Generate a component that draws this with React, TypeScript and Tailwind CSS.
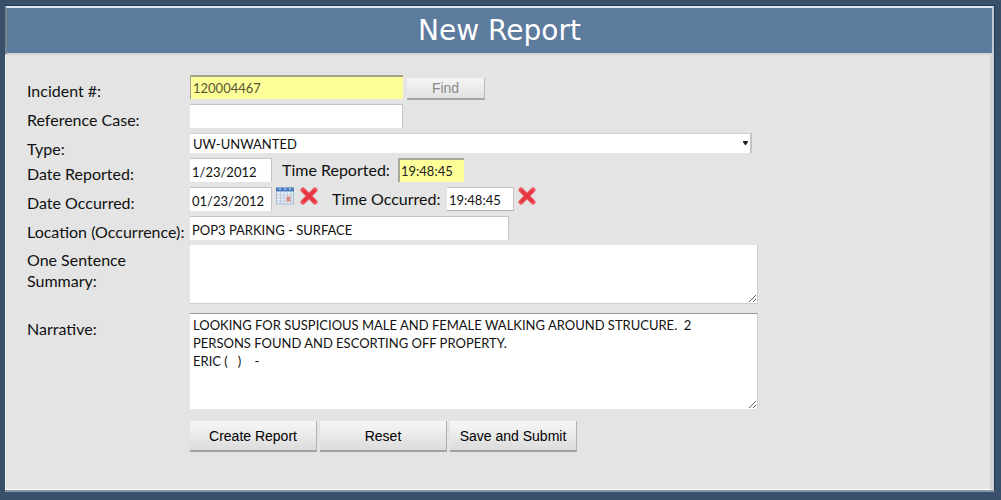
import React, { useState } from 'react';

const fieldClass =
  'h-6 border-t border-r border-t-[#c4c4c4] border-r-[#c4c4c4] bg-white px-[2px] pt-[2px] text-[13px] text-[#111] outline-none';
const labelClass = 'w-[163px] shrink-0 pt-1 text-[16px] leading-6';
const buttonClass =
  "h-[31px] w-[127px] border-r border-b-2 border-r-[#b0b0b0] border-b-[#a0a0a0] bg-linear-to-b from-[#f7f7f7] to-[#dcdcdc] font-['Liberation_Sans',sans-serif] text-[14px] leading-6 text-black";

const CalendarIcon = () => (
  <svg width="18" height="18" viewBox="0 0 18 18">
    <rect x="0.5" y="1" width="17" height="16" fill="#e6edf6" stroke="#a9bdd3" strokeWidth="1" />
    <rect x="0" y="0.5" width="18" height="4" fill="#4a7dbd" />
    <path d="M3 2h2M8 2h2M13 2h2" stroke="#a8c6e8" strokeWidth="1.5" />
    <path d="M4.5 5v12M8 5v12M11.5 5v12M15 5v12M1 8h16M1 11h16M1 14h16" stroke="#b4c5d8" strokeWidth="0.8" />
    <rect x="10.5" y="9.5" width="4" height="5" fill="#dc8b80" />
  </svg>
);

const ClearIcon = () => (
  <svg width="18" height="18" viewBox="0 0 18 18">
    <path d="M3 3L15 15M15 3L3 15" stroke="#ee5560" strokeWidth="5" strokeLinecap="round" />
    <path d="M4 4L14 14M14 4L4 14" stroke="#e33540" strokeWidth="3" strokeLinecap="round" />
  </svg>
);

const App: React.FC = () => {
  const [dateOccurred, setDateOccurred] = useState('01/23/2012');
  const [timeOccurred, setTimeOccurred] = useState('19:48:45');

  return (
    <div className="flex min-h-screen flex-col bg-[#38506a] pt-[5px] pr-[6px] pb-2 pl-[5px] font-['Lato','Liberation_Sans',sans-serif] text-[#111]">
      <div className="flex flex-1 flex-col border-t border-r border-b-2 border-[#1f3a59] border-b-[#8495a5] bg-[#e4e4e4]">
        <h1 className="h-[49px] border-2 border-t-[#dfe6f2] border-r-[#c2cad6] border-b-[#d3d3d3] border-l-[#76828e] bg-[#5d7b9d] text-center font-['DejaVu_Sans',sans-serif] text-[28px] leading-[46px] text-white">
          New Report
        </h1>

        <form
          className="flex flex-1 flex-col gap-[5px] border-r-4 border-b border-l border-r-[#d3d3d3] border-b-white border-l-[#f4f4f4] pt-5 pb-3 pl-[21px]"
          onSubmit={(e) => e.preventDefault()}
        >
          <div className="flex h-6">
            <label htmlFor="incident" className={labelClass}>Incident #:</label>
            <input
              id="incident"
              className="h-6 w-[213px] border-t-2 border-l border-[#a3a38c] bg-[#ffff99] px-[2px] text-[13px] text-[#55552f] outline-none"
              defaultValue="120004467"
            />
            <button
              type="button"
              className="mt-[3px] ml-1 h-[22px] w-[78px] border-r border-b-2 border-r-[#b8b8b8] border-b-[#a4a4a4] bg-linear-to-b from-[#f5f5f5] to-[#e2e2e2] font-['Liberation_Sans',sans-serif] text-[14px] leading-5 text-[#8a8a8a]"
            >
              Find
            </button>
          </div>

          <div className="flex h-6">
            <label htmlFor="refcase" className={labelClass}>Reference Case:</label>
            <input id="refcase" className={`${fieldClass} w-[213px]`} />
          </div>

          <div className="flex h-5">
            <label htmlFor="type" className={labelClass}>Type:</label>
            <div className="relative w-[562px]">
              <select
                id="type"
                className="block h-5 w-full appearance-none border-t border-r-2 border-t-[#cfcfcf] border-r-[#c4c4c4] bg-white px-[3px] text-[13px] leading-4 text-[#111] outline-none"
              >
                <option>UW-UNWANTED</option>
              </select>
              <svg className="pointer-events-none absolute top-2 right-1" width="5" height="4" viewBox="0 0 5 4">
                <path d="M0 0h5v1L3 4H2L0 1z" fill="#222" />
              </svg>
            </div>
          </div>

          <div className="flex h-6">
            <label htmlFor="datereported" className={labelClass}>Date Reported:</label>
            <input id="datereported" className={`${fieldClass} w-[82px]`} defaultValue="1/23/2012" />
            <label htmlFor="timereported" className="ml-[10px] w-[116px] text-[16px] leading-6">Time Reported:</label>
            <input
              id="timereported"
              className="h-6 w-[66px] border-t-2 border-l-2 border-[#a9a994] bg-[#ffff99] px-[1px] text-[13px] text-[#222] outline-none"
              defaultValue="19:48:45"
            />
          </div>

          <div className="flex h-6">
            <label htmlFor="dateoccurred" className={labelClass}>Date Occurred:</label>
            <input
              id="dateoccurred"
              className={`${fieldClass} w-[82px]`}
              value={dateOccurred}
              onChange={(e) => setDateOccurred(e.target.value)}
            />
            <button type="button" aria-label="Pick date" className="ml-1 self-start">
              <CalendarIcon />
            </button>
            <button type="button" aria-label="Clear date" className="ml-[6px] self-start" onClick={() => setDateOccurred('')}>
              <ClearIcon />
            </button>
            <label htmlFor="timeoccurred" className="ml-[14px] w-[115px] text-[16px] leading-6">Time Occurred:</label>
            <input
              id="timeoccurred"
              className={`${fieldClass} w-[67px] border-b border-b-[#b4b4b4]`}
              value={timeOccurred}
              onChange={(e) => setTimeOccurred(e.target.value)}
            />
            <button type="button" aria-label="Clear time" className="ml-1 self-start" onClick={() => setTimeOccurred('')}>
              <ClearIcon />
            </button>
          </div>

          <div className="flex h-6">
            <label htmlFor="location" className={labelClass}>Location (Occurrence):</label>
            <input id="location" className={`${fieldClass} w-[319px]`} defaultValue="POP3 PARKING - SURFACE" />
          </div>

          <div className="flex">
            <label htmlFor="summary" className="w-[163px] shrink-0 pt-1 pr-10 text-[16px] leading-[21px]">
              One Sentence Summary:
            </label>
            <textarea
              id="summary"
              className="h-[59px] w-[568px] border-r border-b border-[#cfcfcf] bg-white px-[3px] text-[13px] outline-none"
            />
          </div>

          <div className="flex pt-1">
            <label htmlFor="narrative" className={labelClass}>Narrative:</label>
            <textarea
              id="narrative"
              className="h-24 w-[568px] border-t border-r border-t-[#999] border-r-[#cfcfcf] bg-white px-[3px] pt-[2px] text-[13px] leading-[18px] text-[#111] outline-none"
              defaultValue={
                'LOOKING FOR SUSPICIOUS MALE AND FEMALE WALKING AROUND STRUCURE.  2\nPERSONS FOUND AND ESCORTING OFF PROPERTY.\nERIC (   )    -'
              }
            />
          </div>

          <div className="flex gap-[3px] pt-[7px] pl-[163px]">
            <button type="submit" className={buttonClass}>Create Report</button>
            <button type="reset" className={buttonClass}>Reset</button>
            <button type="submit" className={buttonClass}>Save and Submit</button>
          </div>
        </form>
      </div>
    </div>
  );
};

export default App;
